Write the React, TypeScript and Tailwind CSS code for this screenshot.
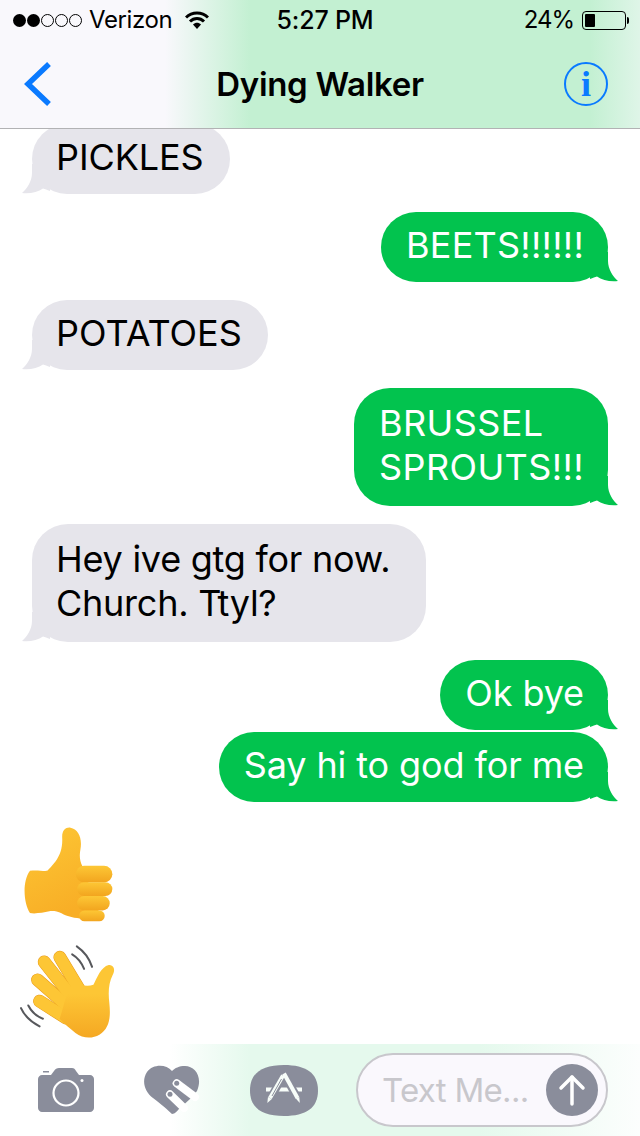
import React from "react";

const messages = [
  { text: ["PICKLES"], me: false, extra: "-mt-[5px] tracking-[-0.1px]" },
  { text: ["BEETS!!!!!!"], me: true, extra: "mt-[18px] tracking-[0.25px]" },
  { text: ["POTATOES"], me: false, extra: "mt-[18px] tracking-[0px]" },
  { text: ["BRUSSEL", "SPROUTS!!!"], me: true, extra: "mt-[18px] tracking-[0.4px]" },
  { text: ["Hey ive gtg for now.", "Church. Ttyl?"], me: false, extra: "mt-[18px] tracking-[-0.25px] pr-[36px]" },
  { text: ["Ok bye"], me: true, extra: "mt-[18px] tracking-[-0.1px]" },
  { text: ["Say hi to god for me"], me: true, extra: "mt-[2px] tracking-[-0.1px]" },
];

const Bubble = ({ text, me, extra }: { text: string[]; me: boolean; extra: string }) => (
  <div className={`relative w-fit ${extra} ${me ? "self-end mr-[32px] bg-[#02c34e] pl-[25px] pr-[24px] text-white" : "ml-[32px] bg-[#e6e5eb] pl-[24px] pr-[26px] text-black"} ${text.length > 1 ? "rounded-[36px] pb-[17px] pt-[13px]" : "rounded-[35px] pb-[15px] pt-[11px]"} text-[36px] leading-[44px]`}>
    {text.map((line) => (
      <div key={line} className="whitespace-nowrap">{line}</div>
    ))}
    <svg
      viewBox="0 0 30 30"
      className={`absolute bottom-0 h-[30px] w-[30px] ${me ? "-right-[10px] -scale-x-100" : "-left-[10px]"}`}
      fill={me ? "#02c34e" : "#e6e5eb"}
    >
      <path d="M10 0V9C10 17 5 25 0 29C8 30 16 28 21 24.500C23 25 25 26 28 27L28 0Z" />
    </svg>
  </div>
);

const ThumbsUp = () => (
  <svg viewBox="70 35 272 292" className="ml-[23px] h-[97px] w-[91px]">
    <defs>
      <linearGradient id="thumb" x1="0" y1="0" x2="0.4" y2="1">
        <stop offset="0" stopColor="#fdc735" />
        <stop offset="1" stopColor="#f8ae26" />
      </linearGradient>
      <linearGradient id="finger" x1="0" y1="0" x2="0" y2="1">
        <stop offset="0" stopColor="#fdc735" />
        <stop offset="1" stopColor="#f2a51f" />
      </linearGradient>
    </defs>
    <path
      fill="url(#thumb)"
      d="M90 170C110 166 130 172 142 170C160 150 190 125 187 70C186 48 198 38 212 40C235 44 248 70 242 105C238 125 240 140 248 156L300 300C270 322 215 315 185 298C170 290 155 290 148 292C130 296 105 300 90 297C72 270 65 205 90 170Z"
    />
    <rect x="228" y="155" width="110" height="50" rx="25" fill="url(#finger)" />
    <rect x="232" y="204" width="106" height="42" rx="21" fill="url(#finger)" />
    <rect x="232" y="246" width="98" height="43" rx="21" fill="url(#finger)" />
    <rect x="238" y="289" width="77" height="33" rx="16" fill="url(#finger)" />
  </svg>
);

const WavingHand = () => (
  <svg viewBox="55 385 295 290" className="ml-[18px] mt-[20px] h-[97px] w-[98px]">
    <defs>
      <linearGradient id="wave" x1="0" y1="0" x2="0" y2="1">
        <stop offset="0.4" stopColor="#fdc635" />
        <stop offset="1" stopColor="#f5a823" />
      </linearGradient>
    </defs>
    <g fill="none" stroke="#57585c" strokeWidth="6" strokeLinecap="round">
      <path d="M232 394C255 410 270 430 278 456" />
      <path d="M218 418C235 428 246 442 254 462" />
      <path d="M64 580C75 605 95 622 120 635" />
      <path d="M86 572C95 590 110 604 130 612" />
    </g>
    <g fill="none" stroke="#e89a1c" strokeWidth="39" strokeLinecap="round">
      <path d="M181 427L240 525" />
      <path d="M134 441L216 545" />
      <path d="M114 495L205 575" />
      <path d="M120 559L200 610" />
    </g>
    <g fill="none" stroke="#fdc635" strokeWidth="36" strokeLinecap="round">
      <path d="M181 427L240 525" />
      <path d="M134 441L216 545" />
      <path d="M114 495L205 575" />
      <path d="M120 559L200 610" />
    </g>
    <path
      fill="url(#wave)"
      d="M215 515C235 505 260 518 282 510C292 490 305 455 328 450C345 450 348 465 340 480C328 505 326 530 330 565C334 605 332 640 300 660C280 672 250 672 228 655C210 640 192 625 180 612C190 590 195 545 215 515Z"
    />
  </svg>
);

const HeartIcon = () => (
  <svg viewBox="0 0 56 50" className="ml-[50px] h-[50px] w-[56px]">
    <path
      fill="#8a8d9b"
      d="M28 6C22 -1 9 -1 3 7C-3 16 1 27 9 33C17 39 24 45 28 49C31 49 33 46 35 44L46 34L53 26C59 12 51 1 41 1C35 1 31 3 28 6Z"
    />
    <g fill="none" stroke="#fff" strokeWidth="8" strokeLinecap="round">
      <path d="M32.700 18.300L51 32" />
      <path d="M26 29.300L40 43" />
    </g>
    <circle cx="32.700" cy="18.300" r="2.500" fill="#8a8d9b" />
    <circle cx="26" cy="29.300" r="2.500" fill="#8a8d9b" />
  </svg>
);

const AppStoreIcon = () => (
  <svg viewBox="0 0 68 51" className="h-[51px] w-[68px]">
    <path
      fill="#8a8d9b"
      d="M34 0C56 0 68 8 68 25.500C68 43 56 51 34 51C12 51 0 43 0 25.500C0 8 12 0 34 0Z"
    />
    <path stroke="#f7fdf9" strokeWidth="4" d="M16 24.500H52" />
    <g fill="none" strokeLinecap="butt">
      <path stroke="#8a8d9b" strokeWidth="8" d="M33 11L20 34" />
      <path stroke="#8a8d9b" strokeWidth="8" d="M34.500 10L48 34" />
      <path stroke="#f7fdf9" strokeWidth="4" d="M33 10.500L20 33" />
      <path stroke="#f7fdf9" strokeWidth="4" d="M34 8.500L47.500 33" />
      <path stroke="#8a8d9b" strokeWidth="1" d="M31.500 14L22 31" />
    </g>
    <path fill="#f7fdf9" d="M18 32L21.800 34L17.300 38Z" />
    <path fill="#f7fdf9" d="M45.800 33.500L49.300 32L49.800 38Z" />
  </svg>
);

export default function App() {
  return (
    <div className="flex h-[1136px] w-[640px] flex-col overflow-hidden bg-white font-['Inter','Liberation_Sans',sans-serif] text-black">
      <header className="h-[129px] shrink-0 border-b border-[#b2b2b4] bg-[linear-gradient(90deg,#f9f8fc_0,#f9f8fc_165px,#c3f0d2_250px,#c3f0d2_590px,#dff5e8_640px)]">
        <div className="flex h-[40px] items-center justify-between pl-[13px] pr-[11px] text-[24px] leading-none">
          <div className="flex w-[226px] items-center">
            <div className="flex gap-[1px]">
              <span className="h-[13px] w-[13px] rounded-full bg-black" />
              <span className="h-[13px] w-[13px] rounded-full bg-black" />
              <span className="h-[13px] w-[13px] rounded-full border border-black" />
              <span className="h-[13px] w-[13px] rounded-full border border-black" />
              <span className="h-[13px] w-[13px] rounded-full border border-black" />
            </div>
            <span className="ml-[7px] tracking-[-0.4px]">Verizon</span>
            <svg viewBox="0 0 24 18" className="ml-[13px] h-[18px] w-[24px]" fill="none" stroke="#000" strokeWidth="3">
              <path d="M1 6.500C7 0.500 17 0.500 23 6.500" />
              <path d="M5 10.500C9 6.500 15 6.500 19 10.500" />
              <path d="M8 13.500C10.500 11 13.500 11 16 13.500L12 18Z" fill="#000" stroke="none" />
            </svg>
          </div>
          <span className="text-[25px] font-medium tracking-[-0.2px]">5:27 PM</span>
          <div className="flex w-[218px] items-center justify-end">
            <span className="tracking-[-1px]">24%</span>
            <div className="ml-[8px] flex h-[19px] w-[44px] rounded-[4px] border border-black p-[2px]">
              <div className="w-[10px] rounded-[1px] bg-black" />
            </div>
            <div className="ml-[1px] h-[7px] w-[2px] rounded-r-full bg-black" />
          </div>
        </div>
        <div className="flex h-[88px] items-center justify-between pl-[24px] pr-[32px]">
          <div className="w-[52px]">
            <svg viewBox="0 0 28 44" className="h-[44px] w-[28px]" fill="none" stroke="#0a7aff" strokeWidth="5.500">
              <path d="M25 2L4 22L25 42" />
            </svg>
          </div>
          <h1 className="text-[33px] font-semibold leading-none tracking-[-0.3px]">Dying Walker</h1>
          <div className="flex h-[44px] w-[44px] items-center justify-center rounded-full border-2 border-[#0a7aff] font-['Liberation_Serif',serif] text-[36px] font-bold leading-none text-[#0a7aff]">
            i
          </div>
        </div>
      </header>

      <main className="flex min-h-0 flex-1 flex-col overflow-hidden">
        {messages.map((m) => (
          <Bubble key={m.text[0]} {...m} />
        ))}
        <div className="mt-[24px]">
          <ThumbsUp />
          <WavingHand />
        </div>
      </main>

      <footer className="flex h-[92px] shrink-0 items-center bg-[linear-gradient(90deg,#ffffff_0,#ffffff_170px,#e5f9ed_250px,#e5f9ed_480px,#fcfefd_640px)] pl-[38px] pr-[32px]">
        <svg viewBox="0 0 56 44" className="h-[44px] w-[56px]">
          <path
            fill="#8a8d9b"
            d="M4 7H13L16 3C17 1 19 0 21 0H34C36 0 37 1 38 3L41 7H52C54 7 56 9 56 11V40C56 42 54 44 52 44H4C2 44 0 42 0 40V11C0 9 2 7 4 7Z"
          />
          <rect x="5" y="3" width="6" height="1.500" fill="#8a8d9b" />
          <circle cx="28" cy="25" r="12.500" fill="none" stroke="#fff" strokeWidth="2.200" />
          <circle cx="44" cy="12.500" r="1.500" fill="#fff" />
        </svg>
        <HeartIcon />
        <div className="ml-[50px]">
          <AppStoreIcon />
        </div>
        <div className="ml-[38px] flex h-[74px] w-[252px] items-center justify-between rounded-[37px] border-2 border-[#c8c7cc] bg-[#faf8fd] pl-[24px] pr-[8px]">
          <span className="whitespace-nowrap text-[33px] leading-none tracking-[-0.7px] text-[#c8c7cc]">Text Me...</span>
          <div className="flex h-[52px] w-[52px] shrink-0 items-center justify-center rounded-full bg-[#8a8d9b]">
            <svg viewBox="0 0 28 32" className="h-[32px] w-[28px]" fill="none" stroke="#fff" strokeWidth="3.500" strokeLinecap="round" strokeLinejoin="round">
              <path d="M14 30V3" />
              <path d="M3 14L14 3L25 14" />
            </svg>
          </div>
        </div>
      </footer>
    </div>
  );
}
